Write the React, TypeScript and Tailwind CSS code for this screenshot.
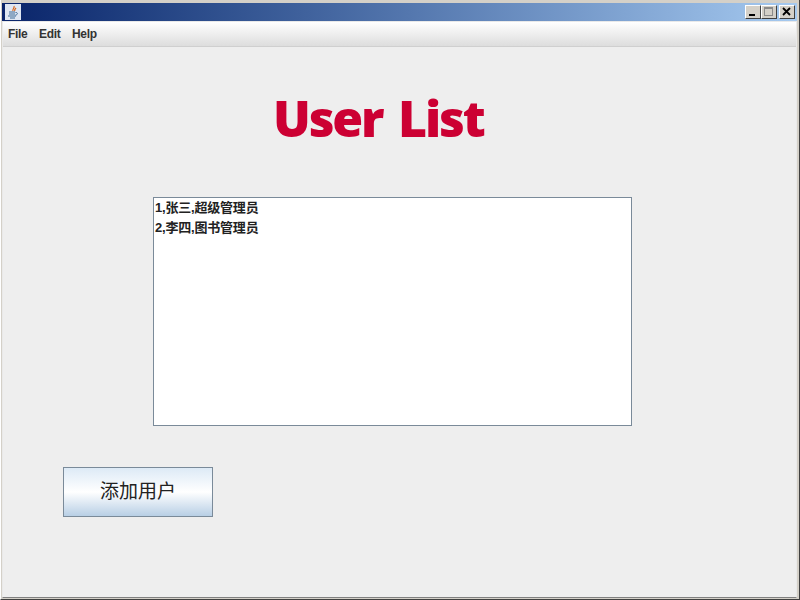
export default function App() {
  const sysBtn = "w-[16px] h-[14px] bg-[#d4d0c8] border border-t-white border-l-white border-r-[#404040] border-b-[#404040] flex items-center justify-center";
  return (
    <div className="w-[800px] h-[600px] overflow-hidden flex flex-col bg-[#d4d0c8] border-r border-b border-r-[#404040] border-b-[#404040] border-l border-l-white pl-[1px] pr-[2px] pt-[3px] pb-[1px]" style={{ fontFamily: '"Liberation Sans", "Noto Sans CJK SC", sans-serif' }}>
      <div className="h-[18px] shrink-0 flex items-center justify-between bg-gradient-to-r from-[#0a246a] to-[#a6caf0] pl-[3px] pr-[2px]">
        <div className="w-[16px] h-[16px] bg-[#dfe6f2] flex items-center justify-center">
          <svg width="14" height="14" viewBox="0 0 14 14" fill="none">
            <path d="M8 1 C9 3 6 4 7 6 M10 3 C9 4 8 5 9 6" stroke="#d8651a" strokeWidth="1.2" />
            <path d="M3 7 H9 M3 9 H9 M2 11 H10 M4 13 H9" stroke="#3f6a96" strokeWidth="1.1" />
            <path d="M9.5 7.5 C12 7 12 10 9.5 10" stroke="#3f6a96" />
          </svg>
        </div>
        <div className="flex">
          <div className={sysBtn}>
            <svg width="10" height="10" viewBox="0 0 10 10"><rect x="1" y="7" width="6" height="2" fill="#000" /></svg>
          </div>
          <div className={sysBtn}>
            <svg width="10" height="10" viewBox="0 0 10 10" fill="none"><rect x="0.5" y="0.5" width="8" height="8" stroke="#8a8a8a" /><rect x="0" y="0" width="9" height="2" fill="#8a8a8a" /></svg>
          </div>
          <div className={`${sysBtn} ml-[2px]`}>
            <svg width="10" height="10" viewBox="0 0 10 10" fill="none"><path d="M1 1 L8 8 M8 1 L1 8" stroke="#000" strokeWidth="1.8" /></svg>
          </div>
        </div>
      </div>
      <div className="flex-1 flex flex-col bg-[#eeeeee] border border-[#e9e9e9] border-b-[#808080]">
        <div className="h-[25px] shrink-0 flex items-center bg-gradient-to-b from-white to-[#dddddd] border-b border-b-[#cfcfcf] pl-[5px] gap-[11.5px] text-[12px] font-bold text-[#333333] tracking-[-0.3px]">
          <span>File</span>
          <span>Edit</span>
          <span>Help</span>
        </div>
        <div className="flex-1 flex flex-col">
          <div className="h-[54px] mt-[44px] ml-[270px] flex items-center text-[#cc0033] text-[50px] font-extrabold leading-none whitespace-nowrap tracking-[-2.2px] [word-spacing:5px]" style={{ fontFamily: '"Open Sans", sans-serif' }}>
            User List
          </div>
          <div className="mt-[52px] ml-[150px] w-[479px] h-[229px] bg-white border border-[#7a8a99] pl-[1px] text-[13px] font-bold text-[#222222] tracking-[-0.2px]">
            <div className="h-[20px] flex items-center">1,张三,超级管理员</div>
            <div className="h-[20px] flex items-center">2,李四,图书管理员</div>
          </div>
          <button className="mt-[41px] ml-[60px] w-[150px] h-[50px] border border-[#7a8a99] bg-gradient-to-b from-[#ddeaf6] via-white to-[#b8cfe5] text-[19px] text-[#222222] flex items-center justify-center">
            添加用户
          </button>
        </div>
      </div>
    </div>
  );
}
